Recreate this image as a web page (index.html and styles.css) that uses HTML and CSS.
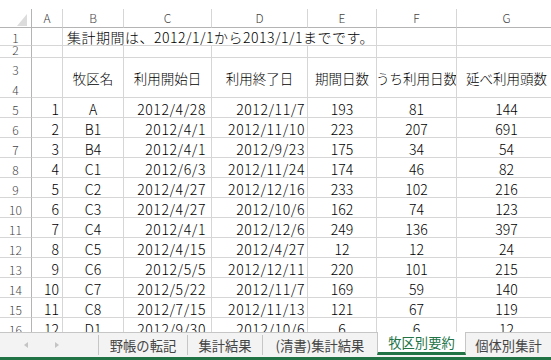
FILE: index.html
```html
<!DOCTYPE html>
<html lang="ja">
<head>
    <meta charset="UTF-8">
    <title>牧区別要約</title>
    <link rel="stylesheet" href="styles.css">
</head>
<body>
    <div class="sheet">
        <div class="row head">
            <div class="corner">
                <svg width="10" height="12" viewBox="0 0 10 12"><polygon points="10,0 10,12 0,12" fill="#dcdcdc"/></svg>
            </div>
            <div>A</div><div>B</div><div>C</div><div>D</div><div>E</div><div>F</div><div>G</div>
        </div>

        <div class="row r1">
            <div class="rh">1</div>
            <div></div>
            <div class="title">集計期間は、2012/1/1から2013/1/1までです。</div>
            <div></div>
            <div></div>
        </div>

        <div class="row r2">
            <div class="rh">2</div>
            <div></div><div></div><div></div><div></div><div></div><div></div><div></div>
        </div>

        <div class="row r34">
            <div class="rh"><span>3</span><span>4</span></div>
            <div></div>
            <div>牧区名</div>
            <div>利用開始日</div>
            <div>利用終了日</div>
            <div>期間日数</div>
            <div>うち利用日数</div>
            <div>延べ利用頭数</div>
        </div>

        <div class="row data"><div class="rh">5</div><div>1</div><div>A</div><div>2012/4/28</div><div>2012/11/7</div><div>193</div><div>81</div><div>144</div></div>
        <div class="row data"><div class="rh">6</div><div>2</div><div>B1</div><div>2012/4/1</div><div>2012/11/10</div><div>223</div><div>207</div><div>691</div></div>
        <div class="row data"><div class="rh">7</div><div>3</div><div>B4</div><div>2012/4/1</div><div>2012/9/23</div><div>175</div><div>34</div><div>54</div></div>
        <div class="row data"><div class="rh">8</div><div>4</div><div>C1</div><div>2012/6/3</div><div>2012/11/24</div><div>174</div><div>46</div><div>82</div></div>
        <div class="row data"><div class="rh">9</div><div>5</div><div>C2</div><div>2012/4/27</div><div>2012/12/16</div><div>233</div><div>102</div><div>216</div></div>
        <div class="row data"><div class="rh">10</div><div>6</div><div>C3</div><div>2012/4/27</div><div>2012/10/6</div><div>162</div><div>74</div><div>123</div></div>
        <div class="row data"><div class="rh">11</div><div>7</div><div>C4</div><div>2012/4/1</div><div>2012/12/6</div><div>249</div><div>136</div><div>397</div></div>
        <div class="row data"><div class="rh">12</div><div>8</div><div>C5</div><div>2012/4/15</div><div>2012/4/27</div><div>12</div><div>12</div><div>24</div></div>
        <div class="row data"><div class="rh">13</div><div>9</div><div>C6</div><div>2012/5/5</div><div>2012/12/11</div><div>220</div><div>101</div><div>215</div></div>
        <div class="row data"><div class="rh">14</div><div>10</div><div>C7</div><div>2012/5/22</div><div>2012/11/7</div><div>169</div><div>59</div><div>140</div></div>
        <div class="row data"><div class="rh">15</div><div>11</div><div>C8</div><div>2012/7/15</div><div>2012/11/13</div><div>121</div><div>67</div><div>119</div></div>
        <div class="row data"><div class="rh">16</div><div>12</div><div>D1</div><div>2012/9/30</div><div>2012/10/6</div><div>6</div><div>6</div><div>12</div></div>
    </div>

    <div class="tabs">
        <div class="nav">
            <svg width="98" height="24" viewBox="0 0 98 24">
                <polygon points="28,9 28,15 24,12" fill="#c4c4c4"/>
                <polygon points="55,9 55,15 59,12" fill="#c4c4c4"/>
            </svg>
        </div>
        <div class="sep"></div>
        <div class="tab t1">野帳の転記</div>
        <div class="sep"></div>
        <div class="tab t2">集計結果</div>
        <div class="sep"></div>
        <div class="tab t3">(清書)集計結果</div>
        <div class="tab active">牧区別要約</div>
        <div class="tab t5">個体別集計</div>
    </div>
</body>
</html>
```

FILE: styles.css
```css
* {
    margin: 0;
    padding: 0;
    box-sizing: border-box;
}

body {
    width: 551px;
    height: 360px;
    overflow: hidden;
    font-family: "Noto Sans CJK JP", "Noto Sans", sans-serif;
    background: #fff;
    color: #000;
    display: flex;
    flex-direction: column;
}

.sheet {
    flex: none;
    height: 332px;
    padding-top: 9px;
    overflow: hidden;
    font-weight: 300;
}

.row {
    display: grid;
    grid-template-columns: 32px 31px 61px 88px 96px 69px 80px 100px;
    width: 557px;
    height: 20px;
}

.row > div {
    border-right: 1px solid #d6d6d6;
    border-bottom: 1px solid #d6d6d6;
    display: flex;
    align-items: flex-end;
    overflow: hidden;
    white-space: nowrap;
    font-size: 14px;
    line-height: 16px;
}

.row > .rh {
    border-right-color: #b4b4b4;
    justify-content: center;
    font-size: 12px;
    line-height: 14px;
    color: #444;
}

/* column letters */
.head {
    height: 19px;
}

.head > div {
    border-bottom-color: #b4b4b4;
    align-items: center;
    justify-content: center;
    font-size: 12px;
    color: #444;
}

.head > .corner {
    border-right-color: #b4b4b4;
    align-items: flex-end;
    justify-content: flex-end;
    padding: 0 4px 1px 0;
}

.r1 {
    height: 18px;
}

.r1 .title {
    grid-column: span 4;
    padding-left: 4px;
    letter-spacing: 0.5px;
}

.r2 {
    height: 12px;
}

.r34 {
    height: 40px;
}

.r34 > div {
    align-items: center;
    justify-content: center;
    font-size: 13.5px;
}

.r34 > .rh {
    flex-direction: column;
    justify-content: flex-start;
}

.r34 > .rh span {
    display: flex;
    align-items: flex-end;
    height: 19px;
}

.r34 > .rh span + span {
    height: 20px;
}

.data > div:nth-child(2) {
    justify-content: flex-end;
    padding-right: 3px;
}

.data > div:nth-child(3) {
    justify-content: center;
}

.data > div:nth-child(4) {
    justify-content: flex-end;
    padding-right: 5px;
    letter-spacing: 0.6px;
}

.data > div:nth-child(5) {
    justify-content: flex-end;
    padding-right: 2px;
    letter-spacing: 0.6px;
}

.data > div:nth-child(n+6) {
    justify-content: center;
}

/* sheet tabs */
.tabs {
    flex: none;
    height: 28px;
    display: flex;
    background: #f3f3f3;
    border-top: 1px solid #c6c6c6;
    border-bottom: 3px solid #217346;
    font-size: 13.3px;
    color: #444;
}

.nav {
    width: 98px;
    display: flex;
}

.sep {
    width: 1px;
    height: 20px;
    margin-top: 2px;
    background: #c6c6c6;
}

.tab {
    display: flex;
    align-items: center;
    justify-content: center;
    white-space: nowrap;
}

.t1 {
    width: 88px;
}

.t2 {
    width: 74px;
}

.t3 {
    width: 114px;
}

.tab.active {
    width: 89px;
    margin-top: -1px;
    margin-bottom: 2px;
    background: #fff;
    color: #217346;
    border-left: 1px solid #c6c6c6;
    border-right: 1px solid #c6c6c6;
    border-bottom: 3px solid #217346;
}

.t5 {
    flex: 1;
}
```
